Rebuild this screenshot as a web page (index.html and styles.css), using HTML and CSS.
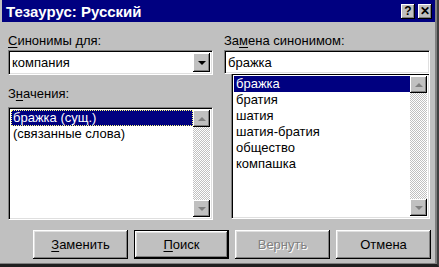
FILE: index.html
```html
<!DOCTYPE html>
<html lang="ru">

<head>
    <meta charset="UTF-8">
    <title>Тезаурус: Русский</title>
    <link rel="stylesheet" href="styles.css">
</head>

<body>
    <div class="window">
        <div class="title-bar">
            <span class="title-text">Тезаурус: Русский</span>
            <div class="title-buttons">
                <span class="title-btn">?</span>
                <span class="title-btn title-close">✕</span>
            </div>
        </div>
        <div class="dialog-body">
            <div class="column column-left">
                <label class="field-label"><u>С</u>инонимы для:</label>
                <div class="combo">
                    <span class="combo-value">компания</span>
                    <span class="combo-btn"><i class="arrow-down"></i></span>
                </div>
                <label class="field-label label-gap">З<u>н</u>ачения:</label>
                <div class="listbox listbox-left">
                    <ul class="list-items">
                        <li class="selected focused">бражка (сущ.)</li>
                        <li>(связанные слова)</li>
                    </ul>
                    <div class="scrollbar">
                        <span class="scroll-btn"><i class="arrow-up gray"></i></span>
                        <span class="scroll-track"></span>
                        <span class="scroll-btn"><i class="arrow-down gray"></i></span>
                    </div>
                </div>
            </div>
            <div class="column column-right">
                <label class="field-label">За<u>м</u>ена синонимом:</label>
                <div class="textbox">бражка</div>
                <div class="listbox listbox-right">
                    <ul class="list-items">
                        <li class="selected">бражка</li>
                        <li>братия</li>
                        <li>шатия</li>
                        <li>шатия-братия</li>
                        <li>общество</li>
                        <li>компашка</li>
                    </ul>
                    <div class="scrollbar">
                        <span class="scroll-btn"><i class="arrow-up gray"></i></span>
                        <span class="scroll-track"></span>
                        <span class="scroll-btn"><i class="arrow-down gray"></i></span>
                    </div>
                </div>
            </div>
        </div>
        <div class="button-row">
            <span class="btn"><u>З</u>аменить</span>
            <span class="btn btn-default"><u>П</u>оиск</span>
            <span class="btn btn-disabled">Вернуть</span>
            <span class="btn">Отмена</span>
        </div>
    </div>
</body>

</html>
```

FILE: styles.css
```css
body,
div,
ul,
li,
span,
label {
    padding: 0;
    margin: 0;
}

body {
    background: #c0c0c0;
    font-family: "Liberation Sans", Arial, sans-serif;
    font-size: 13px;
    color: #000;
}

li {
    list-style: none;
}

u {
    text-decoration: underline;
    text-underline-offset: 2px;
}

.window {
    width: 439px;
    height: 267px;
    box-sizing: border-box;
    padding-left: 2px;
    background: #c0c0c0;
    border-right: 2px solid #404040;
    border-bottom: 3px solid #202020;
    box-shadow: inset -2px -1px #808080;
}

.title-bar {
    height: 22px;
    margin-right: 2px;
    background: #000080;
    color: #fff;
    display: flex;
    align-items: center;
    justify-content: space-between;
    padding: 0 3px 0 4px;
}

.title-text {
    font-size: 15px;
    font-weight: bold;
}

.title-buttons {
    display: flex;
    gap: 3px;
}

.title-btn {
    width: 14px;
    height: 15px;
    background: #c0c0c0;
    color: #000;
    font-size: 12px;
    font-weight: bold;
    line-height: 15px;
    text-align: center;
    box-shadow: inset -1px -1px #000, inset 1px 1px #fff, inset -2px -2px #808080;
}

.dialog-body {
    display: flex;
    gap: 11px;
    padding: 11px 5px 0 6px;
}

.column {
    display: flex;
    flex-direction: column;
}

.column-left {
    width: 205px;
}

.column-right {
    width: 206px;
}

.field-label {
    display: block;
    height: 16px;
    line-height: 16px;
    margin-bottom: 1px;
}

.label-gap {
    margin-top: 11px;
    margin-bottom: 5px;
}

.combo,
.textbox,
.listbox {
    box-sizing: border-box;
    background: #fff;
    border-top: 1px solid #808080;
    border-left: 1px solid #808080;
    border-bottom: 1px solid #fff;
    border-right: 1px solid #fff;
    box-shadow: inset 1px 1px #000, inset -1px -1px #dfdfdf;
}

.combo {
    height: 25px;
    display: flex;
    align-items: center;
    padding: 2px;
}

.combo-value {
    flex: 1;
    padding-left: 1px;
}

.combo-btn {
    width: 17px;
    height: 100%;
    background: #c0c0c0;
    display: flex;
    align-items: center;
    justify-content: center;
    box-shadow: inset -1px -1px #000, inset 1px 1px #fff, inset -2px -2px #808080;
}

.textbox {
    height: 24px;
    line-height: 20px;
    padding: 2px 3px;
}

.listbox {
    display: flex;
    padding: 2px;
}

.listbox-left {
    height: 113px;
}

.listbox-right {
    height: 145px;
    margin-left: 7px;
    border-top: none;
}

.list-items {
    flex: 1;
}

.list-items li {
    height: 16px;
    line-height: 16px;
    padding-left: 2px;
}

.list-items li.selected {
    background: #000080;
    color: #fff;
}

.list-items li.focused {
    outline: 1px dotted #ffff80;
    outline-offset: -1px;
}

.scrollbar {
    width: 17px;
    display: flex;
    flex-direction: column;
}

.scroll-btn {
    height: 17px;
    background: #c0c0c0;
    display: flex;
    align-items: center;
    justify-content: center;
    box-shadow: inset -1px -1px #000, inset 1px 1px #fff, inset -2px -2px #808080;
}

.scroll-track {
    flex: 1;
    background: repeating-conic-gradient(#c0c0c0 0 25%, #fff 0 50%) 0 0 / 2px 2px;
}

.arrow-down,
.arrow-up {
    width: 0;
    height: 0;
    border-left: 4px solid transparent;
    border-right: 4px solid transparent;
}

.arrow-down {
    border-top: 4px solid #000;
}

.arrow-up {
    border-bottom: 4px solid #000;
}

.arrow-down.gray {
    border-top-color: #808080;
}

.arrow-up.gray {
    border-bottom-color: #808080;
}

.button-row {
    display: flex;
    gap: 6px;
    padding: 10px 0 0 31px;
}

.btn {
    width: 95px;
    height: 29px;
    box-sizing: border-box;
    line-height: 29px;
    text-align: center;
    background: #c0c0c0;
    box-shadow: inset -1px -1px #000, inset 1px 1px #fff, inset -2px -2px #808080, inset 2px 2px #dfdfdf;
}

.btn-default {
    border: 1px solid #000;
    line-height: 27px;
}

.btn-disabled {
    color: #808080;
    text-shadow: 1px 1px #fff;
}
```
